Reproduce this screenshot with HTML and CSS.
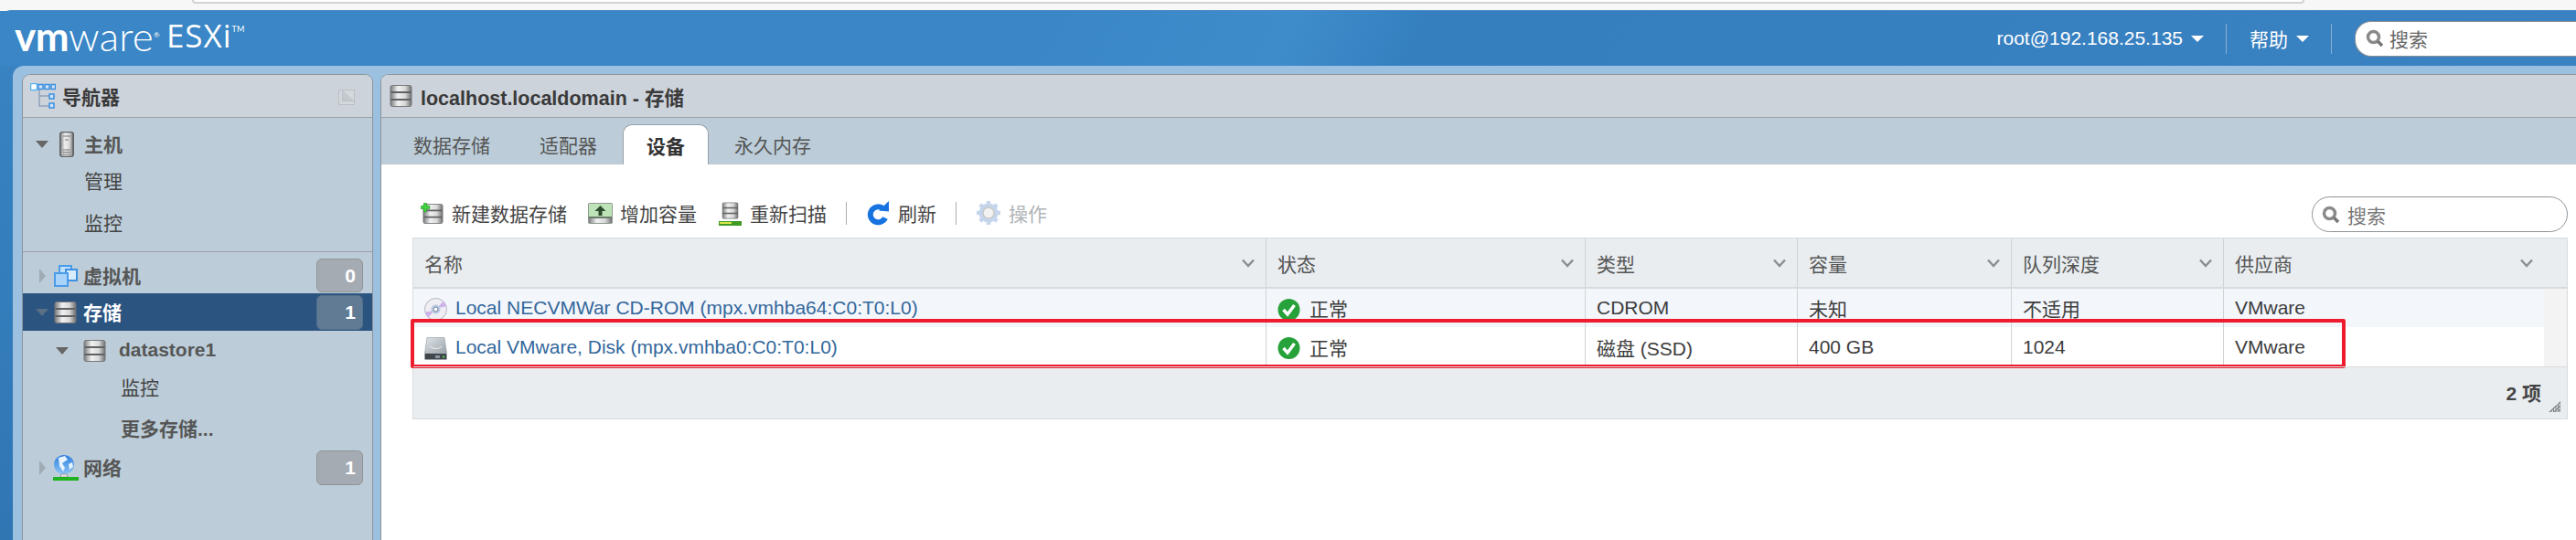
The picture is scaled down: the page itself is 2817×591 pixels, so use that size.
FILE: index.html

```html
<!DOCTYPE html>
<html lang="zh-CN">
<head>
    <meta charset="UTF-8">
    <title>localhost.localdomain - 存储</title>
    <link rel="stylesheet" href="styles.css">
</head>
<body>
<svg class="defs" width="0" height="0">
    <defs>
        <linearGradient id="metal" x1="0" x2="1" y1="0" y2="0">
            <stop offset="0" stop-color="#77797b"/>
            <stop offset=".35" stop-color="#f1f1f1"/>
            <stop offset=".7" stop-color="#d8d8d8"/>
            <stop offset="1" stop-color="#6c6e70"/>
        </linearGradient>
        <linearGradient id="driveTop" x1="0" x2="1" y1="0" y2="1">
            <stop offset="0" stop-color="#dfe3e6"/>
            <stop offset="1" stop-color="#9aa4ab"/>
        </linearGradient>
        <linearGradient id="globe" x1="0" x2="0" y1="0" y2="1">
            <stop offset="0" stop-color="#2f7fe0"/>
            <stop offset="1" stop-color="#8cc4f5"/>
        </linearGradient>
        <symbol id="db" viewBox="0 0 24 24">
            <rect x="0.500" y="0.500" width="23" height="23" rx="2" fill="url(#metal)" stroke="#77797b"/>
            <path d="M1 8h22M1 16h22" stroke="#5f6163" stroke-width="1.800"/>
        </symbol>
        <symbol id="check" viewBox="0 0 24 24">
            <circle cx="12" cy="12" r="12" fill="#27a23a"/>
            <path d="M6 12l4.500 5L18 7" fill="none" stroke="#fff" stroke-width="3.500"/>
        </symbol>
        <symbol id="lens" viewBox="0 0 20 20">
            <circle cx="8.500" cy="8.500" r="6" fill="none" stroke="#8a8a8a" stroke-width="3.500"/>
            <path d="M13 13l5 5" stroke="#777" stroke-width="3.500"/>
        </symbol>
        <symbol id="chev" viewBox="0 0 14 10">
            <path d="M1 1.500l6 6.500 6-6.500" fill="none" stroke="#8b8f93" stroke-width="2.500"/>
        </symbol>
    </defs>
</svg>

<div class="browser-strip"><div class="address-bar"></div></div>

<div class="app">
    <header class="topbar">
        <div class="logo"><span class="logo-vm">vm</span><span class="logo-ware">ware</span><sup class="logo-r">®</sup><span class="logo-esxi">ESXi</span><sup class="logo-tm">TM</sup></div>
        <div class="topbar-right">
            <span class="top-link">root@192.168.25.135<i class="caret"></i></span>
            <span class="top-sep"></span>
            <span class="top-link">帮助<i class="caret"></i></span>
            <span class="top-sep"></span>
            <div class="top-search">
                <svg class="lens-top"><use href="#lens"/></svg>
                <span>搜索</span>
            </div>
        </div>
    </header>

    <div class="workspace">
        <aside class="nav">
            <div class="panel-head">
                <svg class="nav-tree" viewBox="0 0 28 28">
                    <path d="M10 4v21h12M10 14h12" fill="none" stroke="#8fa3bd" stroke-width="1.500"/>
                    <rect x="0.500" y="0.500" width="7" height="7" fill="#fff" stroke="#58b4f0" stroke-width="1.500"/>
                    <rect x="9" y="1.500" width="5" height="5" fill="#cfe4f8" stroke="#3c8fe0" stroke-width="1.500"/>
                    <rect x="16" y="1.500" width="5" height="5" fill="#cfe4f8" stroke="#3c8fe0" stroke-width="1.500"/>
                    <rect x="23" y="1.500" width="4.500" height="5" fill="#cfe4f8" stroke="#3c8fe0" stroke-width="1.500"/>
                    <rect x="21" y="12" width="5" height="5" fill="#cfe4f8" stroke="#3c8fe0" stroke-width="1.500"/>
                    <rect x="21" y="22" width="5" height="5" fill="#cfe4f8" stroke="#3c8fe0" stroke-width="1.500"/>
                </svg>
                <span class="nav-title">导航器</span>
                <svg class="pin" viewBox="0 0 18 17">
                    <path d="M.5.500h17v16H.5z" fill="#d3d8dd" stroke="#b9bfc5"/>
                    <path d="M4.500.500v12h13" fill="#c3c9cf" stroke="#b9bfc5"/>
                </svg>
            </div>
            <div class="nav-group nav-host">
                <div class="nav-row">
                    <i class="tri tri-down"></i>
                    <svg class="host-icon" viewBox="0 0 16 28">
                        <rect x=".75" y=".75" width="14.500" height="26.500" rx="1.500" fill="url(#metal)" stroke="#444"/>
                        <path d="M4 5h8M6 9h4M4 20h8M4 22.500h8M4 25h8" stroke="#777" stroke-width="1.100"/>
                    </svg>
                    <span class="nav-main">主机</span>
                </div>
                <div class="nav-sub nav-manage">管理</div>
                <div class="nav-sub nav-monitor">监控</div>
            </div>
            <div class="nav-list">
                <div class="nav-row nav-vm">
                    <i class="tri tri-right"></i>
                    <svg class="vm-icon" viewBox="0 0 26 24">
                        <rect x="6" y="1" width="13" height="10" fill="#bfe0fb" stroke="#4a9be8" stroke-width="2"/>
                        <rect x="13" y="5" width="12" height="12" fill="#d7ecfd" stroke="#3f8fe0" stroke-width="2"/>
                        <rect x="1" y="9" width="14" height="14" fill="#a9d3f8" stroke="#4a9be8" stroke-width="2"/>
                    </svg>
                    <span class="nav-main">虚拟机</span>
                    <span class="badge">0</span>
                </div>
                <div class="nav-row nav-selected">
                    <i class="tri tri-down tri-dim"></i>
                    <svg class="db-nav"><use href="#db"/></svg>
                    <span class="nav-main">存储</span>
                    <span class="badge badge-dark">1</span>
                </div>
                <div class="nav-row nav-store">
                    <i class="tri tri-down"></i>
                    <svg class="db-nav"><use href="#db"/></svg>
                    <span class="nav-main">datastore1</span>
                </div>
                <div class="nav-sub nav-sub2 nav-store-monitor">监控</div>
                <div class="nav-sub nav-sub2 nav-more">更多存储...</div>
                <div class="nav-row nav-network">
                    <i class="tri tri-right"></i>
                    <svg class="net-icon" viewBox="0 0 28 28">
                        <ellipse cx="12" cy="10.500" rx="11" ry="10.500" fill="url(#globe)"/>
                        <path d="M6 3l7-2 3 4-6 4 3 5-2 4-4-6zM17 10l4-2 1 5-4 3z" fill="#e7f3fd"/>
                        <path d="M9 21h6l1 3H8z" fill="#e9e9e9" stroke="#888" stroke-width=".8"/>
                        <rect x="0" y="24" width="28" height="4" fill="#1fb31f"/>
                    </svg>
                    <span class="nav-main">网络</span>
                    <span class="badge">1</span>
                </div>
            </div>
        </aside>

        <main class="main">
            <div class="panel-head main-head">
                <svg class="db-head"><use href="#db"/></svg>
                <span class="main-title">localhost.localdomain - 存储</span>
            </div>
            <nav class="tabs">
                <span class="tab">数据存储</span>
                <span class="tab">适配器</span>
                <span class="tab tab-active">设备</span>
                <span class="tab">永久内存</span>
            </nav>
            <div class="content">
                <div class="toolbar">
                    <span class="tool tool-new">
                        <svg class="tool-icon" viewBox="0 0 25 23">
                            <use href="#db" x="2" y="1" width="23" height="22"/>
                            <path d="M3.500 0h3v3.500H10v3H6.500V10h-3V6.500H0v-3h3.500z" fill="#3ed43e" stroke="#2a9d2a" stroke-width=".6"/>
                        </svg>
                        新建数据存储
                    </span>
                    <span class="tool tool-grow">
                        <svg class="tool-icon tool-icon-wide" viewBox="0 0 27 23">
                            <rect x=".5" y=".5" width="26" height="22" rx="1" fill="url(#metal)" stroke="#8d9a8d"/>
                            <rect x="1" y="1" width="25" height="15" fill="#bfe3b9"/>
                            <path d="M1 16h25" stroke="#6b7a6b" stroke-width="2"/>
                            <path d="M13.500 3l6 6h-4v5h-4V9h-4z" fill="#2c4a2c"/>
                        </svg>
                        增加容量
                    </span>
                    <span class="tool tool-scan">
                        <svg class="tool-icon" viewBox="0 0 25 27">
                            <use href="#db" x="3.500" y="0" width="18" height="21"/>
                            <rect x="0" y="22" width="25" height="5" fill="#3f9a22"/>
                            <rect x="1" y="23" width="13" height="2" fill="#d9e84a"/>
                        </svg>
                        重新扫描
                    </span>
                    <span class="tool-sep"></span>
                    <span class="tool tool-refresh">
                        <svg class="tool-icon tool-icon-wide" viewBox="0 0 27 27">
                            <path d="M19 8.500a8.500 8.500 0 1 0 2 10" fill="none" stroke="#1673e0" stroke-width="6"/>
                            <path d="M14 10.500l11 1V0z" fill="#1673e0"/>
                        </svg>
                        刷新
                    </span>
                    <span class="tool-sep"></span>
                    <span class="tool tool-off">
                        <svg class="tool-icon tool-gear" viewBox="0 0 28 28">
                            <circle cx="14" cy="14" r="7.500" fill="none" stroke="#c5d6ec" stroke-width="6"/>
                            <path d="M14 1v26M1 14h26M4.800 4.800l18.400 18.400M23.200 4.800L4.800 23.200" stroke="#c5d6ec" stroke-width="4.500"/>
                            <circle cx="14" cy="14" r="6" fill="#f2f2f2" stroke="#c9c9c9" stroke-width="1.500"/>
                        </svg>
                        操作
                    </span>
                    <div class="table-search">
                        <svg class="lens-table"><use href="#lens"/></svg>
                        <span>搜索</span>
                    </div>
                </div>

                <div class="grid-wrap">
                    <div class="grid-head">
                        <div class="th">名称<svg class="chev"><use href="#chev"/></svg></div>
                        <div class="th">状态<svg class="chev"><use href="#chev"/></svg></div>
                        <div class="th">类型<svg class="chev"><use href="#chev"/></svg></div>
                        <div class="th">容量<svg class="chev"><use href="#chev"/></svg></div>
                        <div class="th">队列深度<svg class="chev"><use href="#chev"/></svg></div>
                        <div class="th th-last">供应商<svg class="chev"><use href="#chev"/></svg></div>
                    </div>
                    <div class="grid-body">
                        <div class="grid-row row-alt">
                            <div class="td">
                                <svg class="row-icon" viewBox="0 0 25 25">
                                    <circle cx="12.500" cy="12.500" r="12" fill="#eeeef4" stroke="#b4b4be"/>
                                    <path d="M14 11L21 3.500a12 12 0 0 1 3 6zM11 14l-7 7.500a12 12 0 0 1-3-6z" fill="#cdb3ea"/>
                                    <circle cx="12.500" cy="12.500" r="5" fill="#b9cbe6"/>
                                    <circle cx="12.500" cy="12.500" r="2.500" fill="#fff" stroke="#6f7f98"/>
                                </svg>
                                <a class="dev-link">Local NECVMWar CD-ROM (mpx.vmhba64:C0:T0:L0)</a>
                            </div>
                            <div class="td"><svg class="status-icon"><use href="#check"/></svg>正常</div>
                            <div class="td">CDROM</div>
                            <div class="td">未知</div>
                            <div class="td">不适用</div>
                            <div class="td td-last">VMware</div>
                        </div>
                        <div class="grid-row">
                            <div class="td">
                                <svg class="row-icon" viewBox="0 0 25 25">
                                    <path d="M3 .5h19l2.500 17H.5z" fill="url(#driveTop)" stroke="#8d979e" stroke-width=".6"/>
                                    <path d="M6 10a7 4 0 0 0 13 0" fill="none" stroke="#eef0f2"/>
                                    <rect x=".5" y="18" width="24" height="6.500" fill="#3f474d"/>
                                    <rect x="12" y="20" width="5" height="3" fill="#8d979e"/>
                                    <rect x="20" y="20.500" width="2" height="2" fill="#58d04a"/>
                                </svg>
                                <a class="dev-link">Local VMware, Disk (mpx.vmhba0:C0:T0:L0)</a>
                            </div>
                            <div class="td"><svg class="status-icon"><use href="#check"/></svg>正常</div>
                            <div class="td">磁盘 (SSD)</div>
                            <div class="td">400 GB</div>
                            <div class="td">1024</div>
                            <div class="td td-last">VMware</div>
                        </div>
                        <div class="highlight"></div>
                    </div>
                    <div class="grid-foot">
                        <span>2 项</span>
                        <svg class="grip" viewBox="0 0 13 12">
                            <path d="M13 0v12M10.500 2.500V12M8 5v7M5.500 7.500V12M3 10v2M13 1L1 12M13 5l-7 7M13 9l-3 3" fill="none" stroke="#80858a" stroke-width="1.200"/>
                        </svg>
                    </div>
                </div>
            </div>
        </main>
    </div>
</div>
</body>
</html>
```

FILE: styles.css

```css
* {
    box-sizing: border-box;
}

html, body {
    margin: 0;
    height: 591px;
    overflow: hidden;
}

body {
    font-family: "Liberation Sans", "Noto Sans CJK SC", sans-serif;
    font-size: 21px;
    color: #333;
    background: #f7f7f7;
}

.defs {
    position: absolute;
}

/* browser chrome left over at the top */
.browser-strip {
    height: 11px;
    padding-left: 210px;
}

.address-bar {
    width: 2310px;
    height: 4px;
    background: #fff;
    border: 2px solid #d3d3d3;
    border-top: none;
    border-radius: 0 0 10px 10px;
}

.app {
    height: 580px;
    display: flex;
    flex-direction: column;
    background: linear-gradient(180deg, #3a84c4, #2f76b3);
    border-top-left-radius: 12px;
    border-top: 1px solid #4a8cc4;
}

/* header */
.topbar {
    height: 60px;
    flex: none;
    display: flex;
    justify-content: space-between;
    background: linear-gradient(115deg, #3a86c6 0, #3a86c6 40%, #3f8ccb 50%, #357fbf 55%, #3a82c2 100%);
}

.logo {
    padding: 5px 0 0 16px;
    color: #fff;
    font-family: "Lato", sans-serif;
    white-space: nowrap;
    display: flex;
    align-items: flex-start;
}

.logo-vm {
    font-size: 44px;
    font-weight: 700;
    letter-spacing: -.5px;
    line-height: 44px;
}

.logo-ware {
    font-size: 44px;
    font-weight: 300;
    letter-spacing: .2px;
    line-height: 44px;
}

.logo-r {
    font-size: 8px;
    line-height: 8px;
    margin-top: 17px;
    width: 12px;
}

.logo-esxi {
    font-family: "Open Sans", sans-serif;
    font-size: 35px;
    font-weight: 400;
    letter-spacing: 1px;
    line-height: 44px;
    margin-left: 2px;
}

.logo-tm {
    font-size: 9px;
    line-height: 9px;
    margin-top: 10px;
}

.topbar-right {
    display: flex;
    align-items: center;
    color: #fff;
}

.top-link {
    display: flex;
    align-items: center;
    white-space: nowrap;
}

.caret {
    width: 0;
    height: 0;
    margin-left: 9px;
    border: 7px solid transparent;
    border-top: 7px solid #fff;
    border-bottom: none;
}

.top-sep {
    width: 1px;
    height: 33px;
    background: #86b0d6;
    margin: 0 25px 0 24px;
}

.top-search {
    width: 242px;
    height: 39px;
    background: #fff;
    border: 1px solid #8a8f94;
    border-right: none;
    border-radius: 18px 0 0 18px;
    display: flex;
    align-items: center;
    padding-left: 11px;
    color: #666;
}

.lens-top {
    width: 20px;
    height: 20px;
    margin-right: 6px;
}

/* light blue frame around the panels */
.workspace {
    flex: 1;
    display: flex;
    gap: 8px;
    margin-left: 14px;
    padding: 9px 0 0 10px;
    background: #9bc0e0;
    border-top-left-radius: 12px;
    min-height: 0;
}

.panel-head {
    height: 47px;
    flex: none;
    display: flex;
    align-items: center;
    background: #cdd3da;
    border-bottom: 1px solid #9aa0a6;
}

/* navigator */
.nav {
    width: 384px;
    flex: none;
    background: #bccdd9;
    border: 1px solid #8d9499;
    border-bottom: none;
    border-radius: 9px 9px 0 0;
    overflow: hidden;
}

.nav .panel-head {
    padding-left: 8px;
}

.nav-tree {
    width: 28px;
    height: 28px;
}

.nav-title {
    margin-left: 7px;
    font-weight: 700;
    color: #3a3a3a;
}

.pin {
    width: 18px;
    height: 17px;
    margin-left: auto;
    margin-right: 19px;
    margin-top: 2px;
}

.nav-group {
    height: 147px;
    padding-top: 8px;
    border-bottom: 1px solid #9aa0a6;
}

.nav-row {
    display: flex;
    align-items: center;
    height: 41px;
    position: relative;
    color: #565656;
}

.nav-main {
    font-weight: 700;
    padding-bottom: 2px;
}

.tri {
    width: 0;
    height: 0;
    flex: none;
    border: 7px solid transparent;
}

.tri-down {
    margin-left: 14px;
    border-top: 8px solid #666;
    border-bottom: none;
}

.tri-right {
    margin-left: 18px;
    border-left: 7px solid #9eabb5;
    border-right: none;
    border-width: 8px 0 8px 7px;
}

.tri-dim {
    border-top-color: #5b6f85;
}

.host-icon {
    width: 16px;
    height: 28px;
    margin: 0 11px 0 12px;
}

.nav-sub {
    height: 46px;
    display: flex;
    align-items: center;
    padding-left: 67px;
    color: #444;
}

.nav-manage {
    height: 38px;
}

.nav-monitor {
    height: 54px;
}

.nav-list {
    padding-top: 7px;
}

.nav-vm {
    height: 38px;
}

.vm-icon {
    width: 26px;
    height: 24px;
    margin: 0 6px 0 9px;
}

.nav-selected {
    height: 41px;
    background: #2b5480;
    color: #fff;
}

.db-nav {
    width: 25px;
    height: 24px;
    margin: 0 7px 0 6px;
}

.nav-store {
    height: 44px;
}

.nav-store .tri-down {
    margin-left: 36px;
}

.nav-store .db-nav {
    margin: 0 14px 0 16px;
}

.nav-sub2 {
    padding-left: 107px;
}

.nav-store-monitor {
    height: 34px;
}

.nav-more {
    margin-top: 5px;
    font-weight: 700;
    color: #565656;
}

.nav-network {
    height: 42px;
}

.net-icon {
    width: 28px;
    height: 28px;
    margin: 0 5px 0 8px;
}

.badge {
    position: absolute;
    right: 10px;
    top: 2px;
    width: 51px;
    height: 38px;
    padding-right: 7px;
    text-align: right;
    line-height: 36px;
    font-weight: 700;
    color: #fff;
    background: #a5abb3;
    border: 1px solid #8d9499;
    border-radius: 6px;
}

.nav-vm .badge {
    top: 0;
    height: 37px;
}

.badge-dark {
    background: #617b95;
    border-color: #53708c;
}

/* main panel */
.main {
    flex: 1;
    min-width: 0;
    display: flex;
    flex-direction: column;
    background: #fff;
    border-left: 1px solid #8d9499;
    border-top: 1px solid #8d9499;
    border-top-left-radius: 9px;
    overflow: hidden;
}

.main-head {
    padding-left: 9px;
}

.db-head {
    width: 25px;
    height: 24px;
}

.main-title {
    margin-left: 9px;
    font-weight: 700;
    font-size: 21.5px;
    color: #3a3a3a;
}

.tabs {
    height: 51px;
    flex: none;
    display: flex;
    align-items: flex-end;
    background: #bccdd9;
    padding-left: 21px;
}

.tab {
    height: 44px;
    padding: 0 14px;
    display: flex;
    align-items: center;
    color: #555;
    white-space: nowrap;
}

.tab:first-child {
    margin-right: 26px;
}

.tab:nth-child(2) {
    margin-right: 14px;
}

.tab-active {
    font-weight: 700;
    color: #333;
    background: #fff;
    border: 1px solid #9aa0a6;
    border-bottom: none;
    border-radius: 10px 10px 0 0;
    margin-right: 14px;
    padding: 0 25px;
}

.content {
    flex: 1;
    padding: 0 9px 0 34px;
}

.toolbar {
    height: 80px;
    padding: 37px 0 0 9px;
    display: flex;
    align-items: flex-start;
    white-space: nowrap;
    color: #444;
}

.tool {
    display: flex;
    align-items: center;
    height: 32px;
}

.tool-icon {
    width: 25px;
    height: 23px;
    margin-right: 9px;
}

.tool-icon-wide {
    width: 27px;
    margin-right: 8px;
}

.tool-scan .tool-icon {
    height: 27px;
}

.tool-refresh .tool-icon {
    height: 27px;
}

.tool-gear {
    width: 28px;
    height: 28px;
    margin-right: 8px;
}

.tool-new {
    margin-right: 23px;
}

.tool-grow {
    margin-right: 24px;
}

.tool-sep {
    width: 1px;
    height: 25px;
    margin: 4px 21px 0 21px;
    background: #a9acae;
}

.tool-off {
    color: #b0b4b8;
}

.table-search {
    margin-left: auto;
    width: 280px;
    height: 39px;
    margin-top: -2px;
    border: 1px solid #8d9499;
    border-radius: 20px;
    display: flex;
    align-items: center;
    padding-left: 10px;
    color: #777;
}

.lens-table {
    width: 20px;
    height: 20px;
    margin-right: 8px;
}

/* device table */
.grid-wrap {
    border: 1px solid #d8dbde;
    background: #e9edf0;
}

.grid-head, .grid-row {
    display: grid;
    grid-template-columns: 933px 349px 232px 234px 232px 1fr;
}

.grid-head {
    height: 55px;
    border-bottom: 2px solid #d8dbde;
}

.th {
    display: flex;
    align-items: center;
    justify-content: space-between;
    padding: 0 12px 0 12px;
    border-right: 1px solid #d0d3d6;
    color: #555;
}

.th-last {
    border-right: none;
    padding-right: 37px;
}

.chev {
    width: 14px;
    height: 10px;
}

.grid-body {
    position: relative;
    background: #f3f3f3;
    height: 85px;
}

.grid-row {
    height: 43px;
    width: 2330px;
    background: #fff;
}

.row-alt {
    height: 42px;
    background: #f3f6fb;
}

.td {
    display: flex;
    align-items: center;
    padding-left: 12px;
    border-right: 1px solid #d0d3d6;
    color: #3d3d3d;
    white-space: nowrap;
}

.td-last {
    border-right: none;
}

.row-icon {
    width: 25px;
    height: 25px;
    margin: 3px 9px 0 0;
}

.dev-link {
    color: #33679b;
}

.status-icon {
    width: 25px;
    height: 24px;
    margin: 3px 10px 0 0;
}

.highlight {
    position: absolute;
    left: -3px;
    top: 33px;
    width: 2116px;
    height: 54px;
    border: 4px solid #ee1c2e;
    border-radius: 2px;
}

.grid-foot {
    height: 57px;
    border-top: 1px solid #d8dbde;
    display: flex;
    justify-content: flex-end;
    padding: 12px 0 0;
    position: relative;
    font-weight: 700;
    color: #444;
}

.grid-foot span {
    margin-right: 28px;
}

.grip {
    position: absolute;
    right: 7px;
    bottom: 7px;
    width: 13px;
    height: 12px;
}
```
